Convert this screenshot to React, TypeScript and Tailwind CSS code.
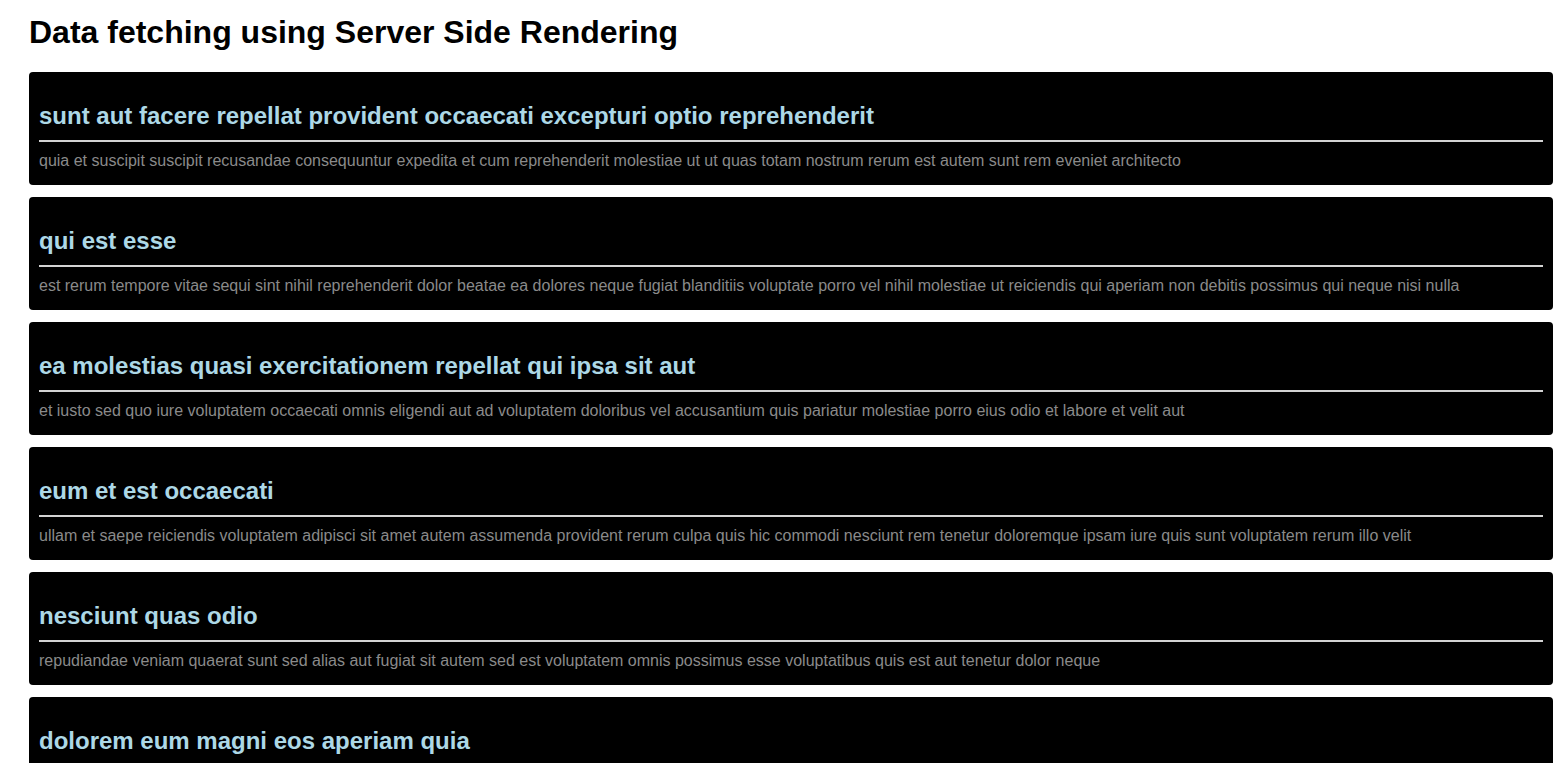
import React from 'react';

const POSTS = [
  {
    title: 'sunt aut facere repellat provident occaecati excepturi optio reprehenderit',
    body: 'quia et suscipit suscipit recusandae consequuntur expedita et cum reprehenderit molestiae ut ut quas totam nostrum rerum est autem sunt rem eveniet architecto',
  },
  {
    title: 'qui est esse',
    body: 'est rerum tempore vitae sequi sint nihil reprehenderit dolor beatae ea dolores neque fugiat blanditiis voluptate porro vel nihil molestiae ut reiciendis qui aperiam non debitis possimus qui neque nisi nulla',
  },
  {
    title: 'ea molestias quasi exercitationem repellat qui ipsa sit aut',
    body: 'et iusto sed quo iure voluptatem occaecati omnis eligendi aut ad voluptatem doloribus vel accusantium quis pariatur molestiae porro eius odio et labore et velit aut',
  },
  {
    title: 'eum et est occaecati',
    body: 'ullam et saepe reiciendis voluptatem adipisci sit amet autem assumenda provident rerum culpa quis hic commodi nesciunt rem tenetur doloremque ipsam iure quis sunt voluptatem rerum illo velit',
  },
  {
    title: 'nesciunt quas odio',
    body: 'repudiandae veniam quaerat sunt sed alias aut fugiat sit autem sed est voluptatem omnis possimus esse voluptatibus quis est aut tenetur dolor neque',
  },
  {
    title: 'dolorem eum magni eos aperiam quia',
    body: 'ut aspernatur corporis harum nihil quis provident sequi mollitia nobis aliquid molestiae perspiciatis et ea nemo ab reprehenderit accusantium quas voluptate dolores velit et doloremque molestiae',
  },
];

const App: React.FC = () => {
  return (
    <div className="min-h-screen bg-white font-['Liberation_Sans',Arial,sans-serif] pl-[29px] pr-[1px]">
      <h1 className="pt-[14px] text-[32px] font-bold leading-[37px] text-black">
        Data fetching using Server Side Rendering
      </h1>

      <div className="mt-[21px] flex flex-col gap-[12px] pb-4">
        {POSTS.map((post, index) => (
          <div key={index} className="rounded-[4px] bg-black px-[10px] pt-[30px] pb-[15px]">
            <h2 className="text-[24px] font-bold leading-[28px] text-[#add8e6]">{post.title}</h2>
            <hr className="mt-[10px] border-0 border-t-2 border-[#d3d3d3]" />
            <p className="mt-[10px] text-[16px] leading-[18px] text-[#8a8a8a]">{post.body}</p>
          </div>
        ))}
      </div>
    </div>
  );
};

export default App;
